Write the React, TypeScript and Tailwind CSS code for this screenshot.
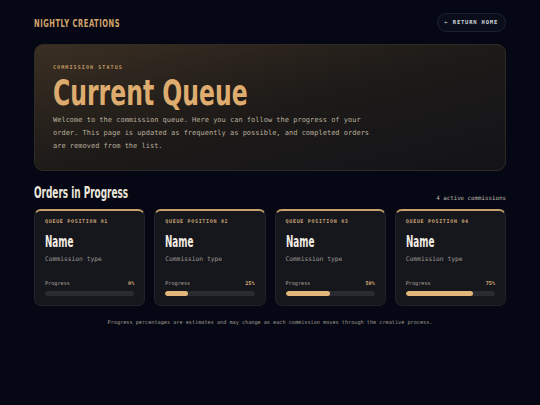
import React from "react";

const orders = [
  { pos: "01", pct: 0 },
  { pos: "02", pct: 25 },
  { pos: "03", pct: 50 },
  { pos: "04", pct: 75 },
];

export default function App() {
  return (
    <div className="w-[540px] h-[405px] bg-[#050814] overflow-hidden font-['DejaVu_Sans_Mono','Liberation_Mono',monospace]">
      <div className="px-[34px] pt-[13px]">
        <header className="flex items-center justify-between h-[19px]">
          <div className="mt-[3px] font-['DejaVu_Sans_Condensed',sans-serif] text-[11px] font-bold tracking-[0.8px] text-[#d4a56c] scale-x-[0.68] origin-left whitespace-nowrap">
            NIGHTLY CREATIONS
          </div>
          <div className="h-[19px] px-[7px] rounded-full border border-[#1c2232] bg-[#0a0e1a] flex items-center text-[5.5px] tracking-[0.8px] text-[#d2d5dc] font-bold">
            ← RETURN HOME
          </div>
        </header>

        <section className="mt-[12px] h-[127px] rounded-[9px] border border-[#2e2a24] bg-gradient-to-br from-[#3b2f22] via-[#1d1a18] to-[#131318] px-[18px] pt-[19px]">
          <div className="text-[5px] tracking-[1.1px] text-[#c39a66] font-bold">COMMISSION STATUS</div>
          <h1 className="mt-[3px] font-['DejaVu_Sans_Condensed',sans-serif] text-[36px] leading-[36px] font-bold text-[#deac6e] scale-x-[0.726] origin-left whitespace-nowrap">
            Current Queue
          </h1>
          <p className="mt-[3px] text-[7px] leading-[13px] text-[#b9ae9c] w-[320px]">
            Welcome to the commission queue. Here you can follow the progress of your order. This page is updated as frequently as possible, and completed orders are removed from the list.
          </p>
        </section>

        <div className="mt-[13px] flex items-end justify-between">
          <h2 className="font-['DejaVu_Sans_Condensed',sans-serif] text-[15px] leading-[18px] font-bold text-[#ece6dc] scale-x-[0.66] origin-left whitespace-nowrap">
            Orders in Progress
          </h2>
          <div className="text-[5.8px] text-[#b9b3a8] mb-[-1px]">4 active commissions</div>
        </div>

        <div className="mt-[7px] grid grid-cols-4 gap-[9px]">
          {orders.map((o) => (
            <div
              key={o.pos}
              className="h-[97px] rounded-[7px] border border-[#22222a] border-t-2 border-t-[#c9a06c] bg-[#16161d] px-[10px] pt-[7px] flex flex-col"
            >
              <div className="text-[5px] tracking-[0.7px] text-[#c4a276] font-bold">QUEUE POSITION {o.pos}</div>
              <div className="mt-[9px] font-['DejaVu_Sans_Condensed',sans-serif] text-[15px] leading-[15px] font-bold text-[#f2ede4] scale-x-[0.65] origin-left whitespace-nowrap">
                Name
              </div>
              <div className="mt-[4px] text-[6.3px] text-[#9b978f]">Commission type</div>
              <div className="mt-auto mb-[9px]">
                <div className="flex justify-between text-[5.2px] text-[#a8a398]">
                  <span>Progress</span>
                  <span className="font-bold text-[#d9b07a]">{o.pct}%</span>
                </div>
                <div className="mt-[3px] h-[5px] rounded-full bg-[#2a2a31] overflow-hidden">
                  <div className="h-full rounded-full bg-[#e3b779]" style={{ width: `${o.pct}%` }} />
                </div>
              </div>
            </div>
          ))}
        </div>

        <p className="mt-[13px] text-center text-[5.2px] text-[#a19b91]">
          Progress percentages are estimates and may change as each commission moves through the creative process.
        </p>
      </div>
    </div>
  );
}
